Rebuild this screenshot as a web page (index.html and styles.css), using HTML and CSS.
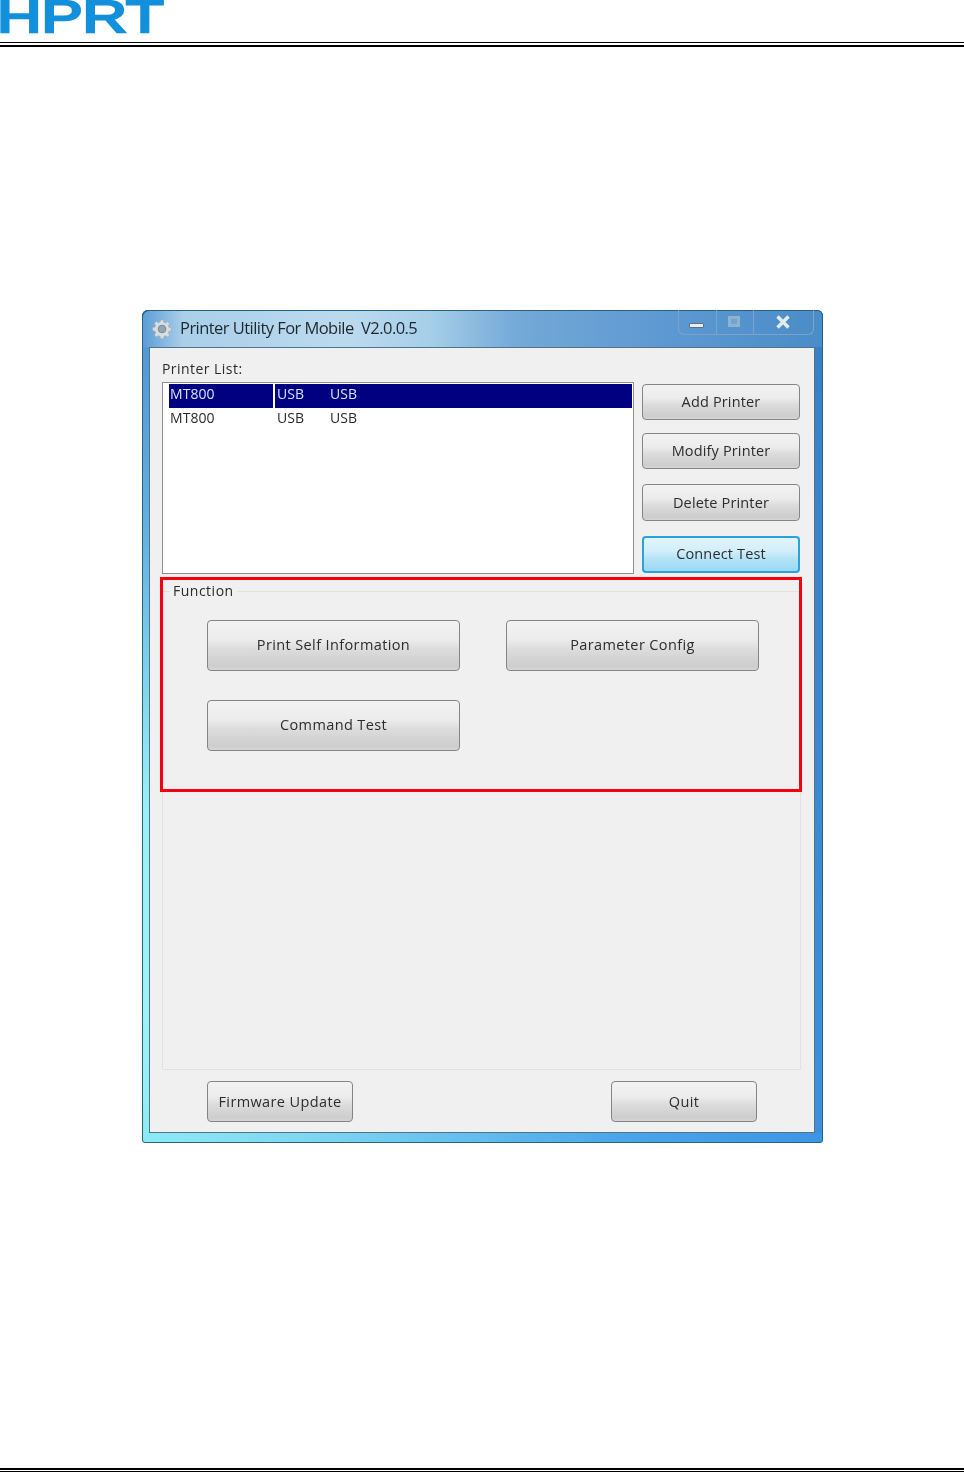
FILE: index.html
```html
<!DOCTYPE html>
<html lang="en">
<head>
<meta charset="utf-8">
<title>Printer Utility For Mobile</title>
<link rel="stylesheet" href="styles.css">
</head>
<body>
<div class="page">
  <header class="doc-header">
    <div class="logo"><span class="logo-text">HPRT</span></div>
    <div class="rule-double"></div>
  </header>
  <main class="doc-body">
    <section class="window">
      <div class="titlebar">
        <svg class="gear" width="20" height="20" viewBox="0 0 20 20">
          <path fill="#d9dde0" stroke="#9aa5ad" stroke-width="0.5" d="M8.6 1h2.8l.5 2.4 1.6.7 2.1-1.3 2 2-1.3 2.1.7 1.6 2.4.5v2.8l-2.4.5-.7 1.6 1.3 2.1-2 2-2.1-1.3-1.6.7-.5 2.4H8.6l-.5-2.4-1.6-.7-2.1 1.3-2-2 1.3-2.1-.7-1.6L.6 11.4V8.6L3 8.1l.7-1.6L2.4 4.4l2-2 2.1 1.3 1.6-.7z"/>
          <circle cx="10" cy="10" r="3.8" fill="#8fa6b8" stroke="#7c8790" stroke-width="1"/>
        </svg>
        <span class="title">Printer Utility For Mobile&nbsp; V2.0.0.5</span>
        <div class="caption">
          <div class="cap cap-min"><span class="min-glyph"></span></div>
          <div class="cap cap-max"><span class="max-glyph"></span></div>
          <div class="cap cap-close">
            <svg width="16" height="14" viewBox="0 0 16 14"><path d="M2.5 1.5l11 11M13.5 1.5l-11 11" stroke="#e6ebef" stroke-width="3.4" fill="none"/></svg>
          </div>
        </div>
      </div>
      <div class="client">
        <div class="list-label">Printer List:</div>
        <div class="top-row">
          <div class="listbox">
            <div class="row row-selected">
              <span class="cell cell-name">MT800</span><span class="cell cell-a">USB</span><span class="cell cell-b">USB</span>
            </div>
            <div class="row">
              <span class="cell cell-name">MT800</span><span class="cell cell-a">USB</span><span class="cell cell-b">USB</span>
            </div>
          </div>
          <div class="side-buttons">
            <button class="btn btn-side">Add Printer</button>
            <button class="btn btn-side btn-gap-a">Modify Printer</button>
            <button class="btn btn-side btn-tall btn-gap-b">Delete Printer</button>
            <button class="btn btn-side btn-tall btn-gap-b btn-focus">Connect Test</button>
          </div>
        </div>
        <div class="group">
          <div class="group-legend">Function</div>
          <div class="highlight"></div>
          <div class="func-grid">
            <button class="btn btn-func">Print Self Information</button>
            <button class="btn btn-func">Parameter Config</button>
            <button class="btn btn-func">Command Test</button>
          </div>
        </div>
        <div class="bottom-row">
          <button class="btn btn-bottom">Firmware Update</button>
          <button class="btn btn-bottom">Quit</button>
        </div>
      </div>
    </section>
  </main>
  <footer class="doc-footer"></footer>
</div>
</body>
</html>
```
FILE: styles.css
```css
* { box-sizing: border-box; }
html, body { margin: 0; padding: 0; background: #fff; }
.page {
  width: 964px;
  height: 1472px;
  display: flex;
  flex-direction: column;
  overflow: hidden;
  font-family: "Open Sans", "Noto Sans", sans-serif;
}
.doc-header { height: 47px; flex: none; }
.logo { height: 34px; }
.logo-text {
  display: block;
  width: 124px;
  font-family: "Liberation Sans", sans-serif;
  font-weight: 400;
  font-size: 44px;
  line-height: 34px;
  letter-spacing: 0;
  color: #1390dc;
  -webkit-text-stroke: 2.4px #1390dc;
  transform: scaleX(1.4);
  transform-origin: left center;
  margin-left: -3px;
  filter: blur(0.5px);
}
.rule-double {
  margin-top: 8px;
  height: 5px;
  border-top: 1px solid #000;
  border-bottom: 2px solid #000;
}
.doc-body { padding: 263px 0 0 142px; flex: none; }
.window {
  width: 681px;
  height: 833px;
  padding: 0 8px 10px 7px;
  border-radius: 6px 6px 3px 3px;
  background-color: #3f8fdc;
  background-image:
    linear-gradient(90deg, #8eeaf6 0, #7fd6f2 25%, #4aa6ea 70%, #3c96e6 100%),
    linear-gradient(180deg, #4f94d2 0, #62aee0 25%, #9af0f8 60%, #9ef2f8 85%, #8eeaf6 100%),
    linear-gradient(180deg, #3a7fc4 0, #3f90dc 100%);
  background-repeat: no-repeat;
  background-size: 100% 10px, 8px 100%, 8px 100%;
  background-position: 0 100%, 0 0, 100% 0;
  box-shadow: inset 0 0 0 1px #2a6478;
  display: flex;
  flex-direction: column;
  filter: blur(0.35px);
}
.titlebar {
  height: 37px;
  flex: none;
  display: flex;
  align-items: center;
  position: relative;
  margin-left: -7px;
  margin-right: -8px;
  padding: 0 8px 0 10px;
  border-radius: 6px 6px 0 0;
  background: linear-gradient(90deg, #5a9cd6 0, #a9cfe9 6%, #bcdaee 30%, #a7cfe9 42%, #74a9d8 55%, #5f9ad2 75%, #4a8cc8 100%);
  box-shadow: inset 1px 1px 0 #2a6080, inset -1px 0 0 #2a6080;
}
.gear { flex: none; }
.title {
  margin-left: 8px;
  margin-top: -2px;
  font-family: "Open Sans", sans-serif;
  font-size: 16.5px;
  letter-spacing: -0.55px;
  color: #1d2730;
  white-space: pre;
}
.caption {
  position: absolute;
  top: 0;
  right: 9px;
  width: 136px;
  height: 25px;
  display: flex;
  border: 1px solid #7ba5c8;
  border-top: none;
  border-radius: 0 0 6px 6px;
}
.cap { display: flex; align-items: center; justify-content: center; flex: none; }
.cap-min { width: 38px; padding-right: 2px; border-right: 1px solid #7ba5c8; }
.cap-max { width: 37px; padding-right: 3px; border-right: 1px solid #7ba5c8; }
.cap-close { flex: 1; margin-left: -2px; }
.min-glyph { width: 15px; height: 5px; margin-top: 7px; background: #e8ecf0; border: 1px solid #5d6f80; border-radius: 1px; }
.max-glyph { width: 12px; height: 11px; margin-top: -2px; border: 3px solid #8fb2d2; background: #6fa3d2; }
.client {
  flex: 1;
  background: #f0f0f0;
  border: 1px solid #4f7488;
  padding: 0 12px;
  display: flex;
  flex-direction: column;
  color: #2b2b2b;
  font-size: 14px;
}
.list-label { height: 34px; padding-top: 11px; line-height: 20px; letter-spacing: 0.45px; flex: none; }
.top-row { display: flex; height: 192px; flex: none; }
.listbox {
  width: 472px;
  height: 192px;
  flex: none;
  background: #fff;
  border: 1px solid #8a8f93;
  padding: 1px 1px 0 6px;
}
.row { display: flex; height: 24px; white-space: nowrap; letter-spacing: 0.05px; }
.row-selected { background: #000080; color: #d8e0ff; }
.cell { display: block; height: 24px; line-height: 20px; padding-left: 1px; }
.cell-name { width: 106px; }
.row-selected .cell-name { border-right: 2px solid #fff; }
.cell-a { width: 54px; padding-left: 2px; }
.cell-b { flex: 1; }
.side-buttons {
  width: 158px;
  margin-left: 8px;
  padding-top: 2px;
  display: flex;
  flex-direction: column;
  flex: none;
}
.btn {
  font-family: "Open Sans", sans-serif;
  font-size: 14.5px;
  color: #2d2d2d;
  padding: 0 0 2px;
  border: 1px solid #858585;
  border-radius: 4px;
  background: linear-gradient(180deg, #f2f2f2 0, #ececec 38%, #dcdcdc 58%, #cdcdcd 92%, #d6d6d6 100%);
  letter-spacing: 0.38px;
}
.btn-side { height: 36px; flex: none; letter-spacing: 0.15px; }
.btn-tall { height: 37px; padding-bottom: 1px; }
.btn-gap-a { margin-top: 13px; }
.btn-gap-b { margin-top: 15px; }
.btn-focus {
  padding-bottom: 2px;
  border: 2px solid #2aa3dc;
  background: linear-gradient(180deg, #e2f4fc 0, #d2eefa 40%, #b4e4f8 62%, #9ad8f4 100%);
}
.group {
  margin-top: 17px;
  height: 479px;
  flex: none;
  position: relative;
  border: 1px solid #e2e2e2;
  width: 639px;
}
.group-legend {
  position: absolute;
  top: -11px;
  left: 7px;
  padding: 0 3px;
  line-height: 20px;
  background: #f0f0f0;
  letter-spacing: 0.5px;
}
.highlight {
  position: absolute;
  top: -15px;
  left: -3px;
  width: 642px;
  height: 215px;
  border: 3px solid #f50010;
  pointer-events: none;
}
.func-grid {
  display: grid;
  grid-template-columns: 253px 253px;
  grid-auto-rows: 51px;
  column-gap: 46px;
  row-gap: 29px;
  padding: 28px 0 0 44px;
}
.bottom-row {
  display: flex;
  justify-content: space-between;
  padding: 11px 0 0 45px;
  width: 595px;
  flex: none;
}
.btn-bottom { width: 146px; height: 41px; padding-bottom: 0; }
.doc-footer {
  margin-top: auto;
  height: 4px;
  flex: none;
  border-top: 2px solid #000;
  border-bottom: 1px solid #000;
}
```
